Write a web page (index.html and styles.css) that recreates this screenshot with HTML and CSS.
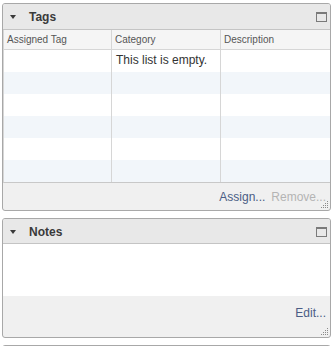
FILE: index.html
```html
<!DOCTYPE html>
<html>
<head>
<meta charset="utf-8">
<link rel="stylesheet" href="styles.css">
</head>
<body>
<div class="stack">
  <section class="panel tags">
    <div class="panel-header">
      <span class="caret"></span>
      <span class="title">Tags</span>
      <span class="max"></span>
    </div>
    <div class="grid">
      <div class="colhead">
        <div class="cell c1">Assigned Tag</div>
        <div class="cell c2">Category</div>
        <div class="cell c3">Description</div>
      </div>
      <div class="row"><div class="cell c1"></div><div class="cell c2 empty">This list is empty.</div><div class="cell c3"></div></div>
      <div class="row alt"><div class="cell c1"></div><div class="cell c2"></div><div class="cell c3"></div></div>
      <div class="row"><div class="cell c1"></div><div class="cell c2"></div><div class="cell c3"></div></div>
      <div class="row alt"><div class="cell c1"></div><div class="cell c2"></div><div class="cell c3"></div></div>
      <div class="row"><div class="cell c1"></div><div class="cell c2"></div><div class="cell c3"></div></div>
      <div class="row alt"><div class="cell c1"></div><div class="cell c2"></div><div class="cell c3"></div></div>
    </div>
    <div class="panel-footer short">
      <span class="link">Assign...</span>
      <span class="link disabled">Remove...</span>
      <svg class="grip" width="8" height="8" viewBox="0 0 8 8">
        <g fill="#8a8a8a">
          <rect x="6" y="0" width="1" height="1"/>
          <rect x="4" y="2" width="1" height="1"/><rect x="6" y="2" width="1" height="1"/>
          <rect x="2" y="4" width="1" height="1"/><rect x="4" y="4" width="1" height="1"/><rect x="6" y="4" width="1" height="1"/>
          <rect x="0" y="6" width="1" height="1"/><rect x="2" y="6" width="1" height="1"/><rect x="4" y="6" width="1" height="1"/><rect x="6" y="6" width="1" height="1"/>
        </g>
      </svg>
    </div>
  </section>

  <section class="panel notes">
    <div class="panel-header">
      <span class="caret"></span>
      <span class="title">Notes</span>
      <span class="max"></span>
    </div>
    <div class="notes-body"></div>
    <div class="panel-footer tall">
      <span class="link">Edit...</span>
      <svg class="grip" width="8" height="8" viewBox="0 0 8 8">
        <g fill="#8a8a8a">
          <rect x="6" y="0" width="1" height="1"/>
          <rect x="4" y="2" width="1" height="1"/><rect x="6" y="2" width="1" height="1"/>
          <rect x="2" y="4" width="1" height="1"/><rect x="4" y="4" width="1" height="1"/><rect x="6" y="4" width="1" height="1"/>
          <rect x="0" y="6" width="1" height="1"/><rect x="2" y="6" width="1" height="1"/><rect x="4" y="6" width="1" height="1"/><rect x="6" y="6" width="1" height="1"/>
        </g>
      </svg>
    </div>
  </section>

  <section class="panel next"></section>
</div>
</body>
</html>
```

FILE: styles.css
```css
html, body {
  margin: 0;
  padding: 0;
  background: #ffffff;
  font-family: "Liberation Sans", Arial, sans-serif;
  color: #333333;
  overflow: hidden;
}

.stack {
  display: flex;
  flex-direction: column;
  gap: 7px;
  padding: 3px 0 0 2px;
  width: 329px;
}

.panel {
  border: 1px solid #a8a8a8;
  border-radius: 3px;
  background: #f0f0f0;
  display: flex;
  flex-direction: column;
  overflow: hidden;
}

.panel-header {
  height: 25px;
  background: #e8e8e8;
  border-bottom: 1px solid #c4c4c4;
  display: flex;
  align-items: center;
  padding: 0 3px 0 7px;
}

.notes .panel-header {
  height: 23px;
  padding-top: 1px;
}

.caret {
  width: 0;
  height: 0;
  border-left: 3px solid transparent;
  border-right: 3px solid transparent;
  border-top: 4px solid #3a3a3a;
  margin-right: 13px;
  margin-top: 1px;
}

.title {
  font-size: 12px;
  font-weight: bold;
  color: #3a3a3a;
  flex: 1;
  padding-top: 1px;
}

.max {
  width: 9px;
  height: 7px;
  border: 1px solid #7a7a7a;
  border-top-width: 2px;
  margin-top: 1px;
}

.grid {
  background: #ffffff;
  border-left: 1px solid #d6d6d6;
  border-bottom: 1px solid #c8c8c8;
  display: flex;
  flex-direction: column;
}

.colhead, .row {
  display: grid;
  grid-template-columns: 108px 109px 1fr;
}

.colhead {
  height: 19px;
  background: #f5f5f5;
  border-bottom: 1px solid #d6d6d6;
  font-size: 10px;
  color: #555555;
}

.colhead .cell {
  padding: 4px 0 0 3px;
}

.row {
  height: 22px;
}

.row.alt {
  background: #f2f6fa;
}

.cell {
  border-right: 1px solid #d6d6d6;
}

.cell.c3 {
  border-right: none;
}

.cell.empty {
  font-size: 12px;
  color: #333333;
  padding: 3px 0 0 4px;
}

.panel-footer {
  position: relative;
  display: flex;
  justify-content: flex-end;
  gap: 6px;
  padding: 7px 4px 0 0;
  font-size: 12px;
}

.panel-footer.short {
  height: 20px;
}

.panel-footer.tall {
  height: 31px;
  padding-top: 10px;
}

.link {
  color: #4a5d85;
}

.link.disabled {
  color: #b4b4b4;
}

.grip {
  position: absolute;
  right: 1px;
  bottom: 1px;
}

.notes-body {
  height: 52px;
  background: #ffffff;
}

.next {
  height: 10px;
  background: #ffffff;
}
```
